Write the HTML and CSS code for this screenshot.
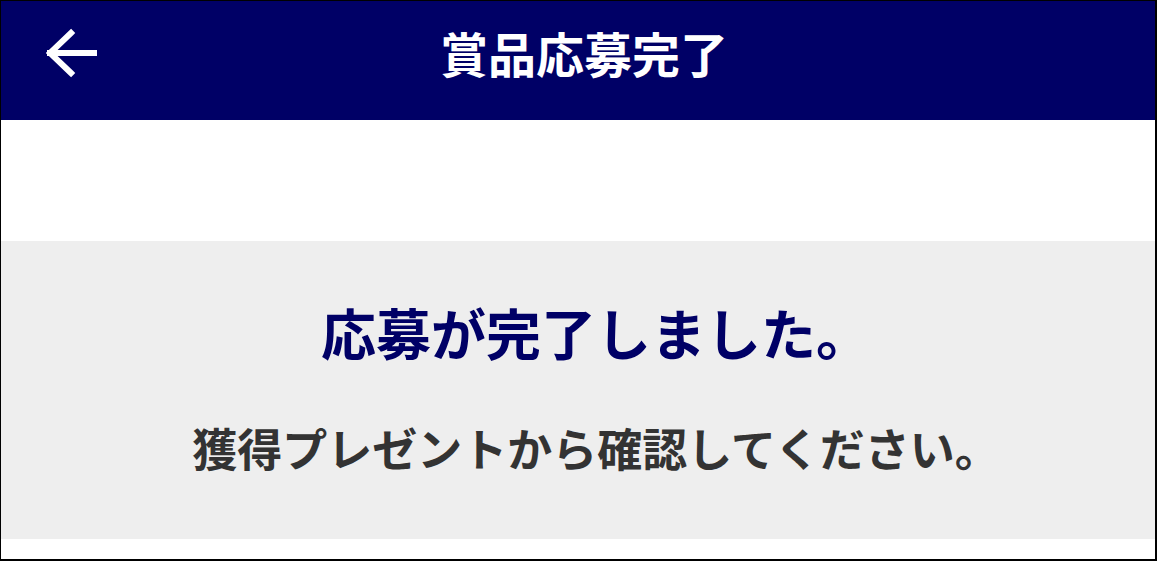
FILE: index.html
```html
<!DOCTYPE html>
<html lang="ja">
<head>
<meta charset="utf-8">
<link rel="stylesheet" href="styles.css">
</head>
<body>
<div class="frame">
  <header class="topbar">
    <span class="back">
      <svg width="52" height="50" viewBox="0 0 52 50">
        <path d="M25 5 L4 25 L25 45 M4 25 H48" fill="none" stroke="#fff" stroke-width="6" stroke-linecap="square" stroke-linejoin="miter"/>
      </svg>
    </span>
    <h1 class="title">賞品応募完了</h1>
  </header>
  <div class="spacer"></div>
  <section class="panel">
    <p class="heading">応募が完了しました。</p>
    <p class="sub">獲得プレゼントから確認してください。</p>
  </section>
</div>
</body>
</html>
```
FILE: styles.css
```css
html, body {
  margin: 0;
  padding: 0;
  background: #fff;
}
.frame {
  width: 1157px;
  height: 561px;
  box-sizing: border-box;
  border-style: solid;
  border-color: #000;
  border-width: 1px 2px 2px 1px;
  display: flex;
  flex-direction: column;
  font-family: "Noto Sans CJK JP", "Noto Sans", sans-serif;
  overflow: hidden;
}
.topbar {
  position: relative;
  height: 119px;
  flex: none;
  background: #000066;
  display: flex;
  align-items: center;
  justify-content: center;
}
.back {
  position: absolute;
  left: 45px;
  top: 27px;
  display: block;
  line-height: 0;
}
.title {
  margin: 0 0 18px 12px;
  color: #fff;
  font-size: 48px;
  font-weight: 700;
  line-height: 1;
}
.spacer {
  height: 121px;
  flex: none;
}
.panel {
  height: 298px;
  flex: none;
  background: #eeeeee;
  display: flex;
  flex-direction: column;
  align-items: center;
  box-sizing: border-box;
  padding: 63px 0 0 36px;
}
.heading {
  margin: 0;
  color: #000066;
  font-size: 55px;
  font-weight: 700;
  line-height: 1;
}
.sub {
  margin: 66px 0 0 0;
  color: #333;
  font-size: 45px;
  font-weight: 700;
  line-height: 1;
}
```
